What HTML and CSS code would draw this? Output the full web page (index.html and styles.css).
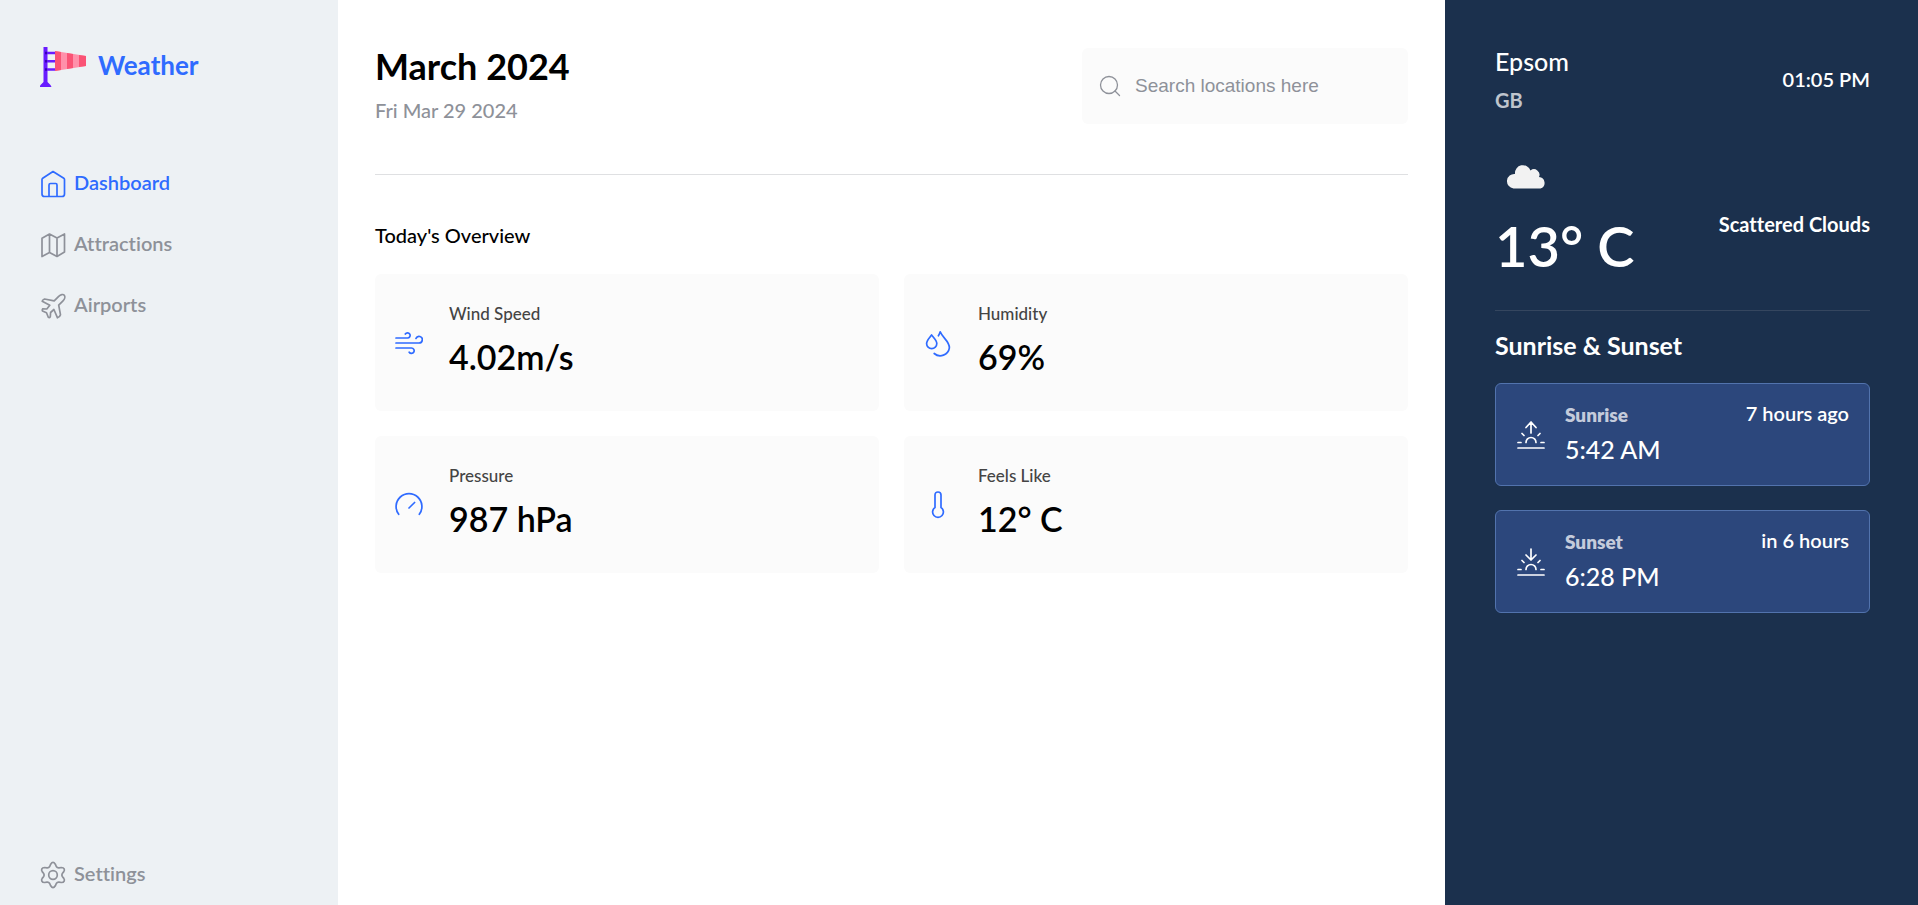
FILE: index.html
```html
<!DOCTYPE html>
<html lang="en">
<head>
<meta charset="utf-8">
<title>Weather</title>
<link rel="stylesheet" href="styles.css">
</head>
<body>
<div class="app">
  <aside class="sidebar">
    <a class="brand" href="#">
      <svg width="48" height="40" viewBox="0 0 48 40" aria-hidden="true">
        <path d="M-.5 40l1-2 3-3V0h4v35l3 3 1 2z" fill="#691bff"/>
        <path d="M5 6h10M5 14.300h10M5 22.500h10" stroke="#691bff" stroke-width="2.600"/>
        <path d="M5 6h2M5 14.300h2M5 22.500h2" stroke="#3a00b8" stroke-width="2.600"/>
        <path d="M15 4L46 9v10l-31 5z" fill="#ff90aa"/>
        <path d="M15 4l6 1v18l-6 1zM27 6l6 .9v14.200l-6 1zM39 7.900l7 1.100v10l-7 1.100z" fill="#fa5375"/>
      </svg>
      <span>Weather</span>
    </a>
    <nav class="nav">
      <a class="nav-link nav-link-active" href="#">
        <svg width="26" height="28" viewBox="0 0 26 28" aria-hidden="true"><path d="M13 1.500L2.700 8.200Q2 8.700 2 9.500V24Q2 26.500 4.500 26.500H22Q24.500 26.500 24.500 24V9.500Q24.500 8.700 23.800 8.200zM9 26V15Q9 13.500 10.500 13.500h5.200Q17 13.500 17 15V26"/></svg>
        <span>Dashboard</span>
      </a>
      <a class="nav-link" href="#">
        <svg width="26" height="28" viewBox="0 0 26 28" aria-hidden="true"><path d="M2 7.200L9.500 3l7.500 4 7.500-4v18L17 25.500l-7.500-4L2 25.500zM9.500 3v18.500M17 7v18.500"/></svg>
        <span>Attractions</span>
      </a>
      <a class="nav-link" href="#">
        <svg width="26" height="28" viewBox="0 0 26 28" aria-hidden="true"><path d="M24.300 3.200C23.200 1.900 20.600 2.500 18.700 4.300L14.200 8.900L4.500 7Q2.200 8 2.200 9.300L9.800 13.300L6.800 17L2.700 16.800Q1.800 18 2.500 19L6.500 20.800L8.300 25.300Q9.500 26 10.300 24.800L10.600 20.500L13.900 17.500L17.500 25.800Q19.800 25.200 20.500 22.800L18.700 13.200L23 8.800C24.900 7 25.300 4.500 24.300 3.200z"/></svg>
        <span>Airports</span>
      </a>
    </nav>
    <a class="nav-link settings" href="#">
      <svg width="26" height="28" viewBox="0 0 26 28" aria-hidden="true"><circle cx="13" cy="14" r="4.300"/><path d="M10.700 3.200Q13 -.4 15.300 3.200L16.300 5.500Q17.200 7 19 6.800L21.400 6.500C24.400 6.500 25 8.800 23.800 10.600L22.300 12.500Q21.400 14 22.300 15.500L23.800 17.400C25 19.200 24.400 21.500 21.400 21.500L19 21.200Q17.200 21 16.300 22.500L15.300 24.800Q13 28.400 10.700 24.800L9.700 22.500Q8.800 21 7 21.200L4.600 21.500C1.600 21.500 1 19.200 2.200 17.400L3.700 15.500Q4.600 14 3.700 12.500L2.200 10.600C1 8.800 1.600 6.500 4.600 6.500L7 6.800Q8.800 7 9.700 5.500z"/></svg>
      <span>Settings</span>
    </a>
  </aside>

  <main class="main">
    <header class="header">
      <div>
        <h1 class="month">March 2024</h1>
        <p class="date">Fri Mar 29 2024</p>
      </div>
      <label class="search">
        <svg width="22" height="22" viewBox="0 0 22 22" aria-hidden="true"><circle cx="10" cy="10" r="8.500"/><path d="M16 16l4.500 4.500"/></svg>
        <input type="text" placeholder="Search locations here" aria-label="Search locations">
      </label>
    </header>
    <h2 class="overview-title">Today's Overview</h2>
    <section class="cards">
      <article class="card">
        <svg width="28" height="28" viewBox="0 0 28 28" aria-hidden="true"><path d="M1 9H12.500A2.600 2.600 0 1 0 10.300 5M1 14H24A3.300 3.300 0 1 0 21 9.400M1 19H16.500A2.700 2.700 0 1 1 14.200 23.200"/></svg>
        <div><h3 class="label">Wind Speed</h3><p class="value">4.02m/s</p></div>
      </article>
      <article class="card">
        <svg width="28" height="28" viewBox="0 0 28 28" aria-hidden="true"><path d="M7.600 6C4.900 9.500 2.600 11.600 2.600 14.500A5 5 0 0 0 12.800 14.500C12.800 11.600 10.300 9.500 7.600 6zM14.400 6.800Q15.600 5 16.200 2.800C18.900 9.500 25.400 12 25.400 18.900A9.300 9.300 0 0 1 10.200 24.500"/></svg>
        <div><h3 class="label">Humidity</h3><p class="value">69%</p></div>
      </article>
      <article class="card">
        <svg width="28" height="28" viewBox="0 0 28 28" aria-hidden="true"><path d="M3.700 23.300A12.900 12.900 0 1 1 24.300 23.300M14 17l5.600-5.500"/></svg>
        <div><h3 class="label">Pressure</h3><p class="value">987 hPa</p></div>
      </article>
      <article class="card">
        <svg width="28" height="28" viewBox="0 0 28 28" aria-hidden="true"><path d="M11 16.500V4Q11 1 14 1T17 4V16.500A5.400 5.400 0 1 1 11 16.500z"/></svg>
        <div><h3 class="label">Feels Like</h3><p class="value">12° C</p></div>
      </article>
    </section>
  </main>

  <aside class="panel">
    <div class="place">
      <div>
        <h2 class="city">Epsom</h2>
        <p class="country">GB</p>
      </div>
      <time class="clock">01:05 PM</time>
    </div>
    <div class="now">
      <div>
        <svg width="62" height="64" viewBox="0 0 62 64" aria-hidden="true"><path d="M18.500 43.500A7 7 0 0 1 20 29A8 8 0 0 1 35.500 25.500A5.500 5.500 0 0 1 44 32A5.900 5.900 0 0 1 45.500 43.500z" fill="#f2f2f2"/></svg>
        <p class="temp">13° C</p>
      </div>
      <p class="sky">Scattered Clouds</p>
    </div>
    <h2 class="sun-title">Sunrise &amp; Sunset</h2>
    <article class="sun-card">
      <svg width="30" height="30" viewBox="0 0 28 30" aria-hidden="true"><path d="M1 28H27M1 22.500H4M24 22.500H27M5 13.500L7 15.500M23 13.500L21 15.500M9 22.500A5 5 0 0 1 19 22.500M14 13V2M9 7.500L14 2L19 7.500"/></svg>
      <div class="sun-info"><h3 class="sun-label">Sunrise</h3><p class="sun-time">5:42 AM</p></div>
      <p class="ago">7 hours ago</p>
    </article>
    <article class="sun-card">
      <svg width="30" height="30" viewBox="0 0 28 30" aria-hidden="true"><path d="M1 28H27M1 22.500H4M24 22.500H27M5 13.500L7 15.500M23 13.500L21 15.500M9 22.500A5 5 0 0 1 19 22.500M14 2V13M9 8L14 13L19 8"/></svg>
      <div class="sun-info"><h3 class="sun-label">Sunset</h3><p class="sun-time">6:28 PM</p></div>
      <p class="ago">in 6 hours</p>
    </article>
  </aside>
</div>
</body>
</html>
```
FILE: styles.css
```css
* { box-sizing: border-box; }
body, h1, h2, h3, p { margin: 0; }
body {
  font-family: Lato, "Liberation Sans", sans-serif;
  font-size: 20px;
  line-height: 24px;
  font-variant-ligatures: none;
  color: #000;
  background: #fff;
}
a { text-decoration: none; }
svg {
  flex: none;
  display: block;
  fill: none;
  stroke-width: 1.700;
  stroke-linecap: round;
  stroke-linejoin: round;
}
.app { display: flex; min-height: 100vh; }

.sidebar {
  flex: none;
  width: 338px;
  padding: 47px 40px 16px;
  display: flex;
  flex-direction: column;
  background: #edf1f4;
}
.brand {
  display: flex;
  align-items: center;
  gap: 10px;
  color: #2f6bff;
  font-size: 26px;
  font-weight: 700;
}
.brand svg { stroke-linecap: butt; }
.brand span { padding-bottom: 4px; }
.nav {
  display: flex;
  flex-direction: column;
  gap: 33px;
  margin-top: 83px;
}
.nav-link {
  display: flex;
  align-items: center;
  gap: 8px;
  color: #8e9199;
  font-weight: 600;
}
.nav-link svg { stroke: currentColor; }
.nav-link span { padding-bottom: 4px; }
.nav-link-active { color: #2f6bff; }
.settings { margin-top: auto; }

.main { flex: 1; min-width: 0; padding: 48px 37px; }
.header {
  display: flex;
  justify-content: space-between;
  align-items: flex-start;
  padding-bottom: 50px;
  border-bottom: 1px solid #dfe0e2;
}
.month { font-size: 36px; line-height: 36px; font-weight: 700; }
.date { margin-top: 14px; color: #8e9199; font-weight: 500; }
.search {
  display: flex;
  align-items: center;
  gap: 14px;
  width: 326px;
  height: 76px;
  padding: 0 17px;
  border-radius: 6px;
  background: #fbfbfb;
}
.search svg { stroke: #8e9199; stroke-width: 1.300; }
.search input {
  flex: 1;
  min-width: 0;
  padding: 0;
  border: 0;
  outline: 0;
  background: none;
  font-family: "Liberation Sans", Arial, sans-serif;
  font-size: 19px;
}
.search input::placeholder { color: #8e9199; opacity: 1; }
.overview-title { margin-top: 48px; font-size: 20px; font-weight: 500; }
.cards {
  display: grid;
  grid-template-columns: 1fr 1fr;
  gap: 25px;
  margin-top: 27px;
}
.card {
  display: flex;
  align-items: center;
  gap: 26px;
  min-height: 137px;
  padding: 0 20px;
  border-radius: 6px;
  background: #fbfbfb;
}
.card svg { stroke: #2f6bff; }
.card div { padding-bottom: 7px; }
.label { font-size: 17px; font-weight: 500; color: #444; }
.value { margin-top: 11px; font-size: 34px; line-height: 40px; font-weight: 600; }

.panel {
  flex: none;
  width: 473px;
  padding: 48px 48px 48px 50px;
  background: #1b304d;
  color: #fff;
}
.place, .now { display: flex; justify-content: space-between; align-items: center; }
.city { font-size: 25px; line-height: 26px; font-weight: 500; }
.country { margin-top: 14px; color: #bfc4cc; font-weight: 700; }
.clock { padding-bottom: 2px; font-weight: 600; }
.now {
  margin-top: 33px;
  padding-bottom: 27px;
  border-bottom: 1px solid #35465f;
}
.temp { font-size: 56px; line-height: 74px; font-weight: 600; }
.sky { padding-top: 20px; font-weight: 700; }
.sun-title { margin: 19px 0 23px; font-size: 25px; line-height: 30px; font-weight: 700; }
.sun-card {
  display: flex;
  align-items: center;
  gap: 19px;
  min-height: 103px;
  padding: 0 20px;
  border: 1px solid #5273ad;
  border-radius: 6px;
  background: #2c477c;
}
.sun-card + .sun-card { margin-top: 24px; }
.sun-card svg { stroke: #fff; }
.sun-info { flex: 1; padding-bottom: 4px; }
.sun-label { font-size: 19px; font-weight: 800; color: #c4cbdb; }
.sun-time { margin-top: 8px; font-size: 25px; line-height: 28px; font-weight: 500; }
.ago { align-self: flex-start; margin-top: 17px; font-weight: 600; }
```
